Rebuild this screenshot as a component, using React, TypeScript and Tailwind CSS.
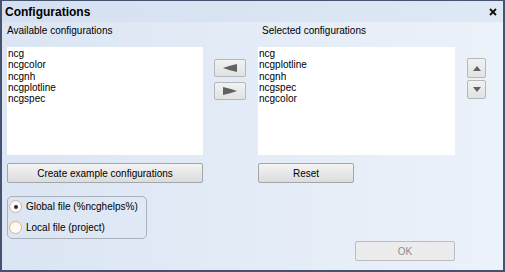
const font = { fontFamily: '"Liberation Sans", Arial, sans-serif' };

function Btn({ label, className = '', disabled = false }: { label: string; className?: string; disabled?: boolean }) {
  return (
    <div
      className={
        'flex h-[20px] items-center justify-center rounded-[2px] border text-[10px] ' +
        (disabled
          ? 'border-[#b9bcc0] bg-[#ececec] text-[#8c8c8c] '
          : 'border-[#a3a6aa] bg-gradient-to-b from-[#f4f4f4] to-[#dcdcdc] text-black ') +
        className
      }
    >
      {label}
    </div>
  );
}

function IconBtn({ children, className = '' }: { children: React.ReactNode; className?: string }) {
  return (
    <div
      className={
        'flex items-center justify-center rounded-[2px] border border-[#b4b8bd] bg-gradient-to-b from-[#f2f2f2] to-[#e2e2e2] ' +
        className
      }
    >
      {children}
    </div>
  );
}

function ListBox({ items }: { items: string[] }) {
  return (
    <div className="mt-[10px] h-[108px] w-full bg-white px-[1px] pt-[1px] text-[10px] leading-[11.25px] text-black">
      {items.map((it) => (
        <div key={it}>{it}</div>
      ))}
    </div>
  );
}

function Radio({ checked, label }: { checked?: boolean; label: string }) {
  return (
    <div className="flex items-center">
      <div className="flex h-[13px] w-[13px] items-center justify-center rounded-full border border-[#d9b48e] bg-gradient-to-br from-[#fdf4ea] to-[#ffffff]">
        {checked && <div className="h-[4px] w-[4px] rounded-full bg-[#1d2a4d]" />}
      </div>
      <span className="ml-[4px] text-[10px] leading-[13px] text-black">{label}</span>
    </div>
  );
}

export default function App() {
  return (
    <div
      style={font}
      className="box-border flex h-[272px] w-[505px] flex-col border-x-2 border-b-2 border-t border-[#46536f] bg-gradient-to-r from-[#dbe5f3] to-[#ecf2fa]"
    >
      <div className="flex h-[21px] items-center justify-between bg-gradient-to-r from-[#d4e0f1] to-[#dfe8f5] pl-[3px] pr-[6px]">
        <span className="text-[12px] font-bold leading-none text-black">Configurations</span>
        <svg width="8" height="8" viewBox="0 0 8 8">
          <path d="M1 1 L7 7 M7 1 L1 7" stroke="#111" strokeWidth="1.8" />
        </svg>
      </div>

      <div className="flex px-[5px] pt-[3px]">
        <div className="flex w-[196px] flex-col">
          <div className="text-[10px] leading-[12px] text-black">Available configurations</div>
          <ListBox items={['ncg', 'ncgcolor', 'ncgnh', 'ncgplotline', 'ncgspec']} />
          <Btn label="Create example configurations" className="mt-[8px]" />
          <div className="mt-[13px] h-[43px] w-[140px] rounded-[5px] border border-[#a9b1bd] pl-[1px] pt-[3px]">
            <Radio checked label="Global file (%ncghelps%)" />
            <div className="mt-[8px]">
              <Radio label="Local file (project)" />
            </div>
          </div>
        </div>

        <div className="ml-[11px] mr-[12px] flex w-[32px] flex-col pt-[34px]">
          <IconBtn className="h-[18px]">
            <svg width="14" height="8" viewBox="0 0 14 8">
              <path d="M0 4 L6 2 L14 0 L14 8 L6 6 Z" fill="#5f6164" />
            </svg>
          </IconBtn>
          <IconBtn className="mt-[5px] h-[18px]">
            <svg width="14" height="8" viewBox="0 0 14 8">
              <path d="M14 4 L8 2 L0 0 L0 8 L8 6 Z" fill="#5f6164" />
            </svg>
          </IconBtn>
        </div>

        <div className="flex w-[197px] flex-col">
          <div className="pl-[4px] text-[10px] leading-[12px] text-black">Selected configurations</div>
          <ListBox items={['ncg', 'ncgplotline', 'ncgnh', 'ncgspec', 'ncgcolor']} />
          <Btn label="Reset" className="mt-[8px] w-[96px]" />
          <div className="mt-[58px] flex justify-end">
            <Btn label="OK" disabled className="w-[100px]" />
          </div>
        </div>

        <div className="ml-[12px] flex w-[19px] flex-col pt-[33px]">
          <IconBtn className="h-[20px]">
            <svg width="8" height="5" viewBox="0 0 8 5">
              <path d="M4 0 L8 5 L0 5 Z" fill="#5f6164" />
            </svg>
          </IconBtn>
          <IconBtn className="mt-[2px] h-[19px]">
            <svg width="8" height="5" viewBox="0 0 8 5">
              <path d="M0 0 L8 0 L4 5 Z" fill="#5f6164" />
            </svg>
          </IconBtn>
        </div>
      </div>
    </div>
  );
}
